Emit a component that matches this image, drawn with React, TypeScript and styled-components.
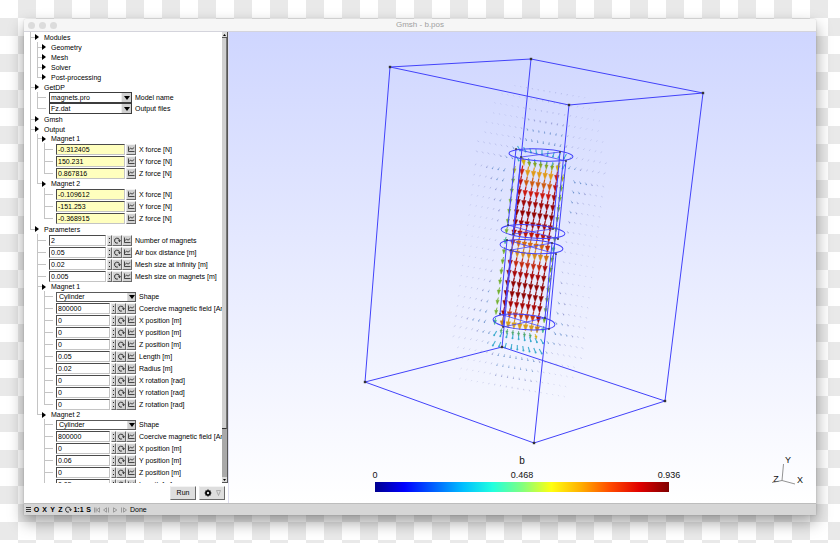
import React from "react";
import styled, { createGlobalStyle, css } from "styled-components";

const Global = createGlobalStyle`
  * { box-sizing: border-box; }
  body { margin: 0; font-family: "Liberation Sans", Arial, sans-serif; font-size: 7px; color: #000; }
  button, input, select { font: inherit; color: inherit; margin: 0; padding: 0; border-radius: 0; }
`;

const Page = styled.main`
  height: 100vh;
  display: flex;
  padding: 19px 24px 28px;
  background: repeating-conic-gradient(#fff 0 25%, #e9e9e9 0 50%) 18px 0 / 36px 36px;
`;

const Window = styled.section`
  flex: 1;
  min-width: 0;
  display: flex;
  flex-direction: column;
  border-radius: 3px 3px 0 0;
  background: #fff;
  box-shadow: 0 7px 16px rgba(0, 0, 0, 0.38), 0 0 2px rgba(0, 0, 0, 0.2);
`;

const TitleBar = styled.header`
  flex: none;
  height: 12px;
  display: grid;
  grid-template-columns: 1fr auto 1fr;
  align-items: center;
  padding: 0 4px;
  background: #f6f6f6;
  border-radius: 3px 3px 0 0;
`;

const Lights = styled.div`
  display: flex;
  gap: 4px;
`;

const Light = styled.button`
  width: 7px;
  height: 7px;
  border: 0;
  border-radius: 50%;
  background: #dcdcdc;
`;

const Title = styled.h1`
  margin: 0;
  font-size: 8px;
  font-weight: 400;
  line-height: 12px;
  color: #a0a0a0;
`;

const Body = styled.div`
  flex: 1;
  min-height: 0;
  display: flex;
  border-top: 1px solid #d4d4dc;
`;

const Sidebar = styled.aside`
  flex: none;
  width: 204px;
  display: flex;
  flex-direction: column;
`;

const TreeArea = styled.div`
  flex: 1;
  min-height: 0;
  display: flex;
`;

const Tree = styled.div`
  flex: 1;
  min-width: 0;
  overflow: hidden;
  padding-left: 6px;
`;

const ScrollTrack = styled.div`
  flex: none;
  width: 6px;
  display: flex;
  flex-direction: column;
  background: #a9a9a9;
  border-right: 1px solid #555;
`;

const ScrollThumb = styled.div`
  flex: 394;
  background: #d0d0d0;
  border-right: 1px solid #777;
  border-bottom: 1px solid #333;
`;

const ScrollRest = styled.div`
  flex: 48;
`;

const ScrollButton = styled.button`
  height: 6px;
  border: 0;
  border-bottom: 1px solid #555;
  background: #dcdcdc;
  display: flex;
  align-items: center;
  justify-content: center;
`;

const heights = { menu: 10, group: 9, select: 11, field: 12 };
type Kind = keyof typeof heights;

const Row = styled.div<{ $kind: Kind }>`
  height: ${(p) => heights[p.$kind]}px;
  display: flex;
  align-items: center;
  white-space: nowrap;
  > * { flex: none; }
`;

const Guide = styled.span<{ $line: boolean }>`
  width: 7px;
  height: 100%;
  background: ${(p) => (p.$line ? "linear-gradient(#c4c4c4, #c4c4c4) 0 0 / 1px 100% no-repeat" : "none")};
`;

const Elbow = styled.span<{ $last?: boolean; $leaf?: boolean }>`
  width: ${(p) => (p.$leaf ? 12 : 5)}px;
  height: 100%;
  background:
    linear-gradient(#c4c4c4, #c4c4c4) 0 0 / 1px ${(p) => (p.$last ? "50%" : "100%")} no-repeat,
    linear-gradient(#c4c4c4, #c4c4c4) 0 50% / ${(p) => (p.$leaf ? 9 : 5)}px 1px no-repeat;
`;

const GroupButton = styled.button`
  display: flex;
  align-items: center;
  gap: 5px;
  border: 0;
  background: none;
  line-height: 9px;
`;

const Label = styled.label`
  margin-left: 3px;
  line-height: 11px;
`;

const sunken = css`
  border: 1px solid #c4c4c4;
  border-top-color: #4a4a4a;
  border-left-color: #4a4a4a;
`;

const raised = css`
  border: 1px solid #6a6a6a;
  border-top-color: #f4f4f4;
  border-left-color: #e8e8e8;
  background: #d2d2d2;
`;

const TextField = styled.input<{ $width: number; $output?: boolean }>`
  width: ${(p) => p.$width}px;
  height: 11px;
  padding-left: 1px;
  margin-right: 1px;
  ${sunken}
  background: ${(p) => (p.$output ? "#ffffbe" : "#fff")};
`;

const MiniButton = styled.button<{ $width: number }>`
  width: ${(p) => p.$width}px;
  height: 11px;
  display: flex;
  align-items: center;
  justify-content: center;
  ${raised}
  svg { flex: none; }
`;

const SelectBox = styled.span<{ $width: number; $combo: boolean }>`
  width: ${(p) => p.$width}px;
  height: ${(p) => (p.$combo ? 11 : 10)}px;
  display: grid;
  border: 1px solid ${(p) => (p.$combo ? "#3c3c3c" : "#5a5a5a")};
  background: #fff;
  > * { grid-area: 1 / 1; }
`;

const Select = styled.select<{ $combo: boolean }>`
  appearance: none;
  border: 0;
  width: 100%;
  padding-left: ${(p) => (p.$combo ? 1 : 2)}px;
  background: transparent;
  line-height: 8px;
`;

const SelectArrow = styled.span<{ $combo: boolean }>`
  justify-self: end;
  width: ${(p) => (p.$combo ? 10 : 8)}px;
  display: flex;
  align-items: center;
  justify-content: center;
  pointer-events: none;
  background: #d0d0d0;
  border-left: 1px solid ${(p) => (p.$combo ? "#eee" : "#ddd")};
`;

const Actions = styled.div`
  flex: none;
  height: 20px;
  display: flex;
  align-items: center;
  justify-content: flex-end;
  gap: 3px;
  padding: 0 3px 1px;
`;

const ActionButton = styled.button`
  width: 26px;
  height: 14px;
  display: flex;
  align-items: center;
  justify-content: center;
  gap: 4px;
  ${raised}
  background: #dedede;
`;

const Canvas = styled.div`
  flex: 1;
  min-width: 0;
  border-left: 1px solid #dde;
  background: linear-gradient(#cfd6ff, #fff);
  svg { display: block; width: 100%; height: 100%; }
`;

const StatusBar = styled.footer`
  flex: none;
  height: 12px;
  display: flex;
  align-items: center;
  gap: 3px;
  padding-left: 2px;
  background: #d6d6d6;
  border-top: 1px solid #bdbdbd;
  line-height: 10px;
`;

const StatusButton = styled.button<{ $width: number }>`
  width: ${(p) => p.$width}px;
  height: 10px;
  display: flex;
  align-items: center;
  justify-content: center;
  border: 0;
  background: none;
  font-weight: 700;
  svg { flex: none; }
`;

const Down = () => (
  <svg width="6" height="4" viewBox="0 0 6 4" aria-hidden="true"><path d="M0 0H6L3 4Z" fill="#000" /></svg>
);

const ReloadIcon = () => (
  <svg width="7" height="7" viewBox="0 0 7 7" aria-hidden="true">
    <path d="M3.900 6A2.500 2.500 0 1 1 5.500 3.200" fill="none" stroke="#222" strokeWidth=".9" />
    <path d="M4 3.200H7L5.500 5.200Z" fill="#222" />
  </svg>
);

const ChartIcon = () => (
  <svg width="7" height="6" viewBox="0 0 7 6" aria-hidden="true">
    <path d="M.5 .5V5.500H6.500M1 3.700L2.600 2L4 3.200L6.200 1.500" fill="none" stroke="#222" strokeWidth=".8" />
  </svg>
);

const DotsIcon = () => (
  <svg width="1" height="5" viewBox="0 0 1 5" aria-hidden="true"><path d="M0 0h1v1H0zM0 4h1v1H0z" fill="#222" /></svg>
);

type Item = {
  kind: Kind;
  text: string;
  level: number;
  guides?: boolean[];
  last?: boolean;
  value?: string;
  output?: boolean;
};

const menu = (text: string, level: number, last = false, guides: boolean[] = level ? [true] : []): Item =>
  ({ kind: "menu", text, level, last, guides });
const group = (text: string, last: boolean, guides: boolean[]): Item => ({ kind: "group", text, level: 1, last, guides });
const select = (text: string, value: string, guides: boolean[], last = false): Item =>
  ({ kind: "select", text, value, level: guides.length, guides, last });
const field = (text: string, value: string, guides: boolean[], last = false, output = false): Item =>
  ({ kind: "field", text, value, level: guides.length, guides, last, output });

const forces = (values: string[], guides: boolean[]) =>
  values.map((v, i) => field(`${"XYZ"[i]} force [N]`, v, guides, i === 2, true));

const items: Item[] = [
  menu("Modules", 0),
  menu("Geometry", 1),
  menu("Mesh", 1),
  menu("Solver", 1),
  menu("Post-processing", 1, true),
  menu("GetDP", 0),
  select("Model name", "magnets.pro", [true]),
  select("Output files", "Fz.dat", [true], true),
  menu("Gmsh", 0),
  menu("Output", 0),
  group("Magnet 1", false, [true]),
  ...forces(["-0.312405", "150.231", "0.867816"], [true, true]),
  group("Magnet 2", true, [true]),
  ...forces(["-0.109612", "-151.253", "-0.368915"], [true, false]),
  menu("Parameters", 0, true),
  field("Number of magnets", "2", [false]),
  field("Air box distance [m]", "0.05", [false]),
  field("Mesh size at infinity [m]", "0.02", [false]),
  field("Mesh size on magnets [m]", "0.005", [false]),
  group("Magnet 1", false, [false]),
  select("Shape", "Cylinder", [false, true]),
  field("Coercive magnetic field [Am", "800000", [false, true]),
  field("X position [m]", "0", [false, true]),
  field("Y position [m]", "0", [false, true]),
  field("Z position [m]", "0", [false, true]),
  field("Length [m]", "0.05", [false, true]),
  field("Radius [m]", "0.02", [false, true]),
  field("X rotation [rad]", "0", [false, true]),
  field("Y rotation [rad]", "0", [false, true]),
  field("Z rotation [rad]", "0", [false, true], true),
  group("Magnet 2", true, [false]),
  select("Shape", "Cylinder", [false, false]),
  field("Coercive magnetic field [Am", "800000", [false, false]),
  field("X position [m]", "0", [false, false]),
  field("Y position [m]", "0.06", [false, false]),
  field("Z position [m]", "0", [false, false]),
  field("Length [m]", "0.05", [false, false]),
];

function TreeRow({ item, index }: { item: Item; index: number }) {
  const id = `item-${index}`;
  const guides = (item.guides ?? []).map((g, i) => <Guide key={i} $line={g} />);
  if (item.kind === "menu" || item.kind === "group") {
    return (
      <Row $kind={item.kind}>
        {guides}
        <Elbow $last={item.last} />
        <GroupButton>
          <svg width="4" height="6" viewBox="0 0 4 6" aria-hidden="true"><path d="M0 0L4 3L0 6Z" fill="#000" /></svg>
          {item.text}
        </GroupButton>
      </Row>
    );
  }
  const total = item.level === 1 ? 83 : 80;
  const combo = item.level === 1;
  return (
    <Row $kind={item.kind}>
      {guides}
      <Elbow $leaf $last={item.last} />
      {item.kind === "select" ? (
        <SelectBox $width={total} $combo={combo}>
          <SelectArrow $combo={combo}><Down /></SelectArrow>
          <Select id={id} $combo={combo} defaultValue={item.value}><option>{item.value}</option></Select>
        </SelectBox>
      ) : (
        <>
          <TextField id={id} $output={item.output} $width={item.output ? 69 : total - 26} defaultValue={item.value} />
          {!item.output && (
            <>
              <MiniButton $width={5} aria-label="Range"><DotsIcon /></MiniButton>
              <MiniButton $width={10} aria-label="Loop"><ReloadIcon /></MiniButton>
            </>
          )}
          <MiniButton $width={10} aria-label="Graph"><ChartIcon /></MiniButton>
        </>
      )}
      <Label htmlFor={id}>{item.text}</Label>
    </Row>
  );
}

const BLUE = "#4242fa";

const boxPoints = [[390, 67], [531, 59], [703, 93], [569, 105], [365, 382], [502, 347], [665, 401], [534, 443]];
const boxEdges = [[0, 1], [1, 2], [2, 3], [3, 0], [4, 5], [5, 6], [6, 7], [7, 4], [0, 4], [1, 5], [2, 6], [3, 7]];

const rings = [
  { cx: 541, cy: 155, rx: 32, ry: 6, r: 3 },
  { cx: 533, cy: 231.5, rx: 32, ry: 6.6, r: 4 },
  { cx: 531.5, cy: 246.7, rx: 31.5, ry: 6.8, r: 4 },
  { cx: 524, cy: 322, rx: 31, ry: 7.6, r: 5 },
];

const ringPoints = [
  [[516, 149], [560, 152], [566, 161], [521, 157]],
  [[508, 225], [553, 229], [558, 239], [513, 234]],
  [[507, 240], [552, 243], [556, 254], [511, 250]],
  [[500, 314], [545, 318], [549, 329], [503, 327]],
];

const rowColors = [
  "#e09a18", "#cf5a10", "#cc1810", "#a00808", "#920404", "#a00606", "#c01408", "#d86c10",
  "#d88c1c", "#c42a10", "#a80808", "#900404", "#900404", "#a80808", "#c83c10", "#d8a020",
];
const edgeColors = [
  "#cc2010", "#c01010", "#a80808", "#980404", "#900404", "#980404", "#a80a08", "#c03010",
  "#d07010", "#a80808", "#940404", "#900404", "#900404", "#980404", "#a80808", "#c88018",
];

const at = (c: number, r: number) => [522 + 5.8 * c - 1.3 * r, 175.5 + 1 * c + 10.1 * r];

function Arrow({ x, y, size, color, dx = -0.8 }: { x: number; y: number; size: number; color: string; dx?: number }) {
  const h = size * 0.62;
  const w = size * 0.23;
  return (
    <g fill={color} stroke={color}>
      <path d={`M${x - dx} ${y - size}L${x} ${y - h}`} strokeWidth={size > 8 ? 1.2 : 0.9} />
      <path d={`M${x - w} ${y - h}H${x + w}L${x + dx * 0.4} ${y}Z`} strokeWidth="0.4" />
    </g>
  );
}

function FieldVectors() {
  const out: React.ReactNode[] = [];
  for (let r = -9; r <= 21; r++) {
    for (let c = -8; c <= 15; c++) {
      const gx = c < 0 ? -c : c > 6 ? c - 6 : 0;
      const gy = r < 0 ? -r : r > 15 ? r - 15 : 0;
      if (gy === 0 && gx <= 2) continue;
      const [x, y0] = at(c, r);
      const y = y0 - 3 - (r < 0 ? 3 : 0);
      const side = c < 3 ? -1 : 1;
      const reach = (gy * gy) / 80 + (gx * gx) / 70;
      if (reach > 1) continue;
      const endGap = Math.min(Math.abs(r), Math.abs(r - 15));
      const strength = 1 / (1 + 0.4 * gx * (1 + endGap * 0.2) + 0.5 * gy);
      const near = gy > 0 && gy <= 2 && gx <= 1;
      const len = near ? 4.4 : 0.5 + strength * 4.2;
      const fan = (c - 3) / 7;
      const lean = gy > 0 ? (r < 0 ? -fan : fan) : 0.6 * side;
      const color = near ? "#28a4c8" : strength > 0.32 ? "#3f72ba" : "#6068b4";
      const opacity = near ? 0.85 : Math.min(0.7, 0.08 + strength * 1.3);
      out.push(
        <path
          key={`${c}:${r}`}
          d={`M${x - lean * len * 0.5} ${y - len / 2}L${x + lean * len * 0.5} ${y + len / 2}`}
          stroke={color}
          strokeWidth={near ? 1.1 : 0.7}
          opacity={opacity}
        />,
      );
      if (strength > 0.28) {
        out.push(<circle key={`h${c}:${r}`} cx={x + lean * len * 0.5} cy={y + len / 2} r={near ? 1 : 0.7} fill={color} opacity={opacity} />);
      }
    }
  }
  for (let r = 0; r <= 15; r++) {
    for (const c of [-1.3, 7]) {
      const [x, y] = at(c, r);
      const gap = r === 7 || r === 15;
      out.push(<Arrow key={`g${c}:${r}`} x={x} y={y - 1} size={7} color={gap ? "#38b08c" : r === 0 ? "#a8b010" : "#74b030"} />);
    }
    for (let c = 0; c <= 6; c++) {
      const [x, y] = at(c, r);
      const edge = c === 0 || c === 6;
      out.push(<Arrow key={`a${c}:${r}`} x={x} y={y} size={10} color={(edge ? edgeColors : rowColors)[r]} />);
    }
  }
  for (let c = 0; c <= 6; c++) {
    const [x, y] = at(c, -1);
    const edge = c === 0 || c === 6;
    out.push(<Arrow key={`t${c}`} x={x} y={y} size={edge ? 9 : 7} dx={(3 - c) * 0.7} color={edge ? "#d8b010" : "#86a424"} />);
    const [bx, by] = at(c, 16);
    out.push(<Arrow key={`b${c}`} x={bx} y={by - 4} size={5} dx={(c - 3) * 0.3} color={c === 6 ? "#d8b010" : "#50a870"} />);
  }
  return <g>{out}</g>;
}

const jet = ["#00008f", "#0000ff", "#0060ff", "#00bfff", "#20ffdf", "#80ff80", "#ffff10", "#ffaf00", "#ff4a00", "#e00000", "#800000"];

function Scene() {
  return (
    <svg viewBox="229 32 587 471" role="img" aria-label="Magnetic field b around two cylinder magnets">
      <defs>
        <linearGradient id="jet">
          {jet.map((c, i) => <stop key={c} offset={i / 10} stopColor={c} />)}
        </linearGradient>
      </defs>
      <FieldVectors />
      <g stroke={BLUE} fill="none" strokeWidth="1">
        {boxEdges.map(([a, b]) => (
          <path key={`${a}-${b}`} d={`M${boxPoints[a].join(" ")}L${boxPoints[b].join(" ")}`} />
        ))}
        {rings.map((e) => (
          <ellipse key={e.cy} cx={e.cx} cy={e.cy} rx={e.rx} ry={e.ry} transform={`rotate(${e.r} ${e.cx} ${e.cy})`} />
        ))}
        {[0, 2].map((k) => ringPoints[k].map((p, i) => (
          <path key={`${k}${i}`} d={`M${p.join(" ")}L${ringPoints[k + 1][i].join(" ")}`} />
        )))}
        {ringPoints.map((p, i) => (
          <path key={i} strokeWidth=".8" d={`M${p[0].join(" ")}L${p[2].join(" ")}M${p[1].join(" ")}L${p[3].join(" ")}`} />
        ))}
      </g>
      <g fill="#333">
        {boxPoints.map(([x, y]) => <rect key={x} x={x - 1.2} y={y - 1.2} width="2.4" height="2.4" />)}
        {ringPoints.flat().map(([x, y]) => <rect key={`${x}${y}`} x={x - 0.8} y={y - 0.8} width="1.6" height="1.6" />)}
      </g>
      <rect x="375" y="482" width="294" height="10" fill="url(#jet)" />
      <g fontFamily="Liberation Sans, Arial, sans-serif" fontSize="9" fill="#111" textAnchor="middle">
        <text x="522" y="464" fontSize="10">b</text>
        <text x="375" y="478">0</text>
        <text x="522" y="478">0.468</text>
        <text x="669" y="478">0.936</text>
        <text x="788" y="463">Y</text>
        <text x="776" y="482">Z</text>
        <text x="800" y="483">X</text>
      </g>
      <path d="M783.5 464L782 480.500L795 484M782 480.500L772 482.500" fill="none" stroke="#777" strokeWidth=".8" />
    </svg>
  );
}

const PlayIcon = ({ d }: { d: string }) => (
  <svg width="6" height="6" viewBox="0 0 6 6" aria-hidden="true"><path d={d} fill="none" stroke="#8c8c8c" strokeWidth=".8" /></svg>
);

export default function App() {
  return (
    <Page>
      <Global />
      <Window>
        <TitleBar>
          <Lights>
            <Light aria-label="Close" />
            <Light aria-label="Minimize" />
            <Light aria-label="Zoom" />
          </Lights>
          <Title>Gmsh - b.pos</Title>
        </TitleBar>
        <Body>
          <Sidebar>
            <TreeArea>
              <Tree>{items.map((item, i) => <TreeRow key={i} item={item} index={i} />)}</Tree>
              <ScrollTrack>
                <ScrollButton aria-label="Scroll up">
                  <svg width="3" height="2" viewBox="0 0 3 2"><path d="M0 2H3L1.5 0Z" /></svg>
                </ScrollButton>
                <ScrollThumb />
                <ScrollRest />
                <ScrollButton aria-label="Scroll down">
                  <svg width="3" height="2" viewBox="0 0 3 2"><path d="M0 0H3L1.5 2Z" /></svg>
                </ScrollButton>
              </ScrollTrack>
            </TreeArea>
            <Actions>
              <ActionButton>Run</ActionButton>
              <ActionButton aria-label="Options">
                <svg width="8" height="8" viewBox="0 0 8 8" aria-hidden="true">
                  <circle cx="4" cy="4" r="2" fill="none" stroke="#000" strokeWidth="1.6" />
                  <path d="M4 .6V2M4 6V7.400M.6 4H2M6 4H7.400M1.600 1.600L2.600 2.600M5.400 5.400L6.400 6.400M6.400 1.600L5.400 2.600M1.600 6.400L2.600 5.400" stroke="#000" strokeWidth="1.2" />
                </svg>
                <svg width="5" height="6" viewBox="0 0 5 6" aria-hidden="true">
                  <path d="M.5 .5H4.500L2.500 5.500Z" fill="none" stroke="#999" strokeWidth=".7" />
                </svg>
              </ActionButton>
            </Actions>
          </Sidebar>
          <Canvas><Scene /></Canvas>
        </Body>
        <StatusBar>
          <StatusButton $width={5} aria-label="Menu">
            <svg width="5" height="5" viewBox="0 0 5 5" aria-hidden="true"><path d="M0 .5H5M0 2.500H5M0 4.500H5" stroke="#222" strokeWidth=".9" /></svg>
          </StatusButton>
          <StatusButton $width={5}>O</StatusButton>
          <StatusButton $width={5}>X</StatusButton>
          <StatusButton $width={5}>Y</StatusButton>
          <StatusButton $width={5}>Z</StatusButton>
          <StatusButton $width={5} aria-label="Rotate"><ReloadIcon /></StatusButton>
          <StatusButton $width={9}>1:1</StatusButton>
          <StatusButton $width={5}>S</StatusButton>
          <StatusButton $width={6} aria-label="First"><PlayIcon d="M.5 .5V5.500M2 .5V5.500M5.500 .8V5.200L2.500 3Z" /></StatusButton>
          <StatusButton $width={6} aria-label="Previous"><PlayIcon d="M3.500 .8V5.200L.6 3ZM5.500 .5V5.500" /></StatusButton>
          <StatusButton $width={6} aria-label="Play"><PlayIcon d="M1.500 .8V5.200L4.800 3Z" /></StatusButton>
          <StatusButton $width={6} aria-label="Next"><PlayIcon d="M.5 .5V5.500M2.500 .8V5.200L5.500 3Z" /></StatusButton>
          <output>Done</output>
        </StatusBar>
      </Window>
    </Page>
  );
}
